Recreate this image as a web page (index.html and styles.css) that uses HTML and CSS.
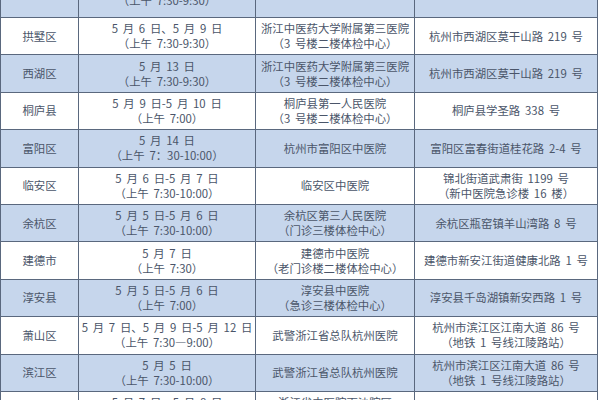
FILE: index.html
```html
<!DOCTYPE html>
<html lang="zh-CN">
<head>
<meta charset="utf-8">
<title>体检安排</title>
<link rel="stylesheet" href="styles.css">
</head>
<body>
<table class="sched">
  <colgroup>
    <col class="c-area">
    <col class="c-date">
    <col class="c-hosp">
    <col class="c-addr">
  </colgroup>
  <tbody>
    <tr class="blue top">
      <td></td>
      <td>5 月 8 日<br>（上午 7:30-9:30）</td>
      <td></td>
      <td></td>
    </tr>
    <tr>
      <td>拱墅区</td>
      <td>5 月 6 日、5 月 9 日<br>（上午 7:30-9:30）</td>
      <td>浙江中医药大学附属第三医院<br>（3 号楼二楼体检中心）</td>
      <td>杭州市西湖区莫干山路 219 号</td>
    </tr>
    <tr class="blue">
      <td>西湖区</td>
      <td>5 月 13 日<br>（上午 7:30-9:30）</td>
      <td>浙江中医药大学附属第三医院<br>（3 号楼二楼体检中心）</td>
      <td>杭州市西湖区莫干山路 219 号</td>
    </tr>
    <tr>
      <td>桐庐县</td>
      <td>5 月 9 日-5 月 10 日<br>（上午 7:00）</td>
      <td>桐庐县第一人民医院<br>（3 号楼二楼体检中心）</td>
      <td>桐庐县学圣路 338 号</td>
    </tr>
    <tr class="blue">
      <td>富阳区</td>
      <td>5 月 14 日<br>（上午 7：30-10:00）</td>
      <td>杭州市富阳区中医院</td>
      <td>富阳区富春街道桂花路 2-4 号</td>
    </tr>
    <tr>
      <td>临安区</td>
      <td>5 月 6 日-5 月 7 日<br>（上午 7:30-10:00）</td>
      <td>临安区中医院</td>
      <td>锦北街道武肃街 1199 号<br>（新中医院急诊楼 16 楼）</td>
    </tr>
    <tr class="blue">
      <td>余杭区</td>
      <td>5 月 5 日-5 月 6 日<br>（上午 7:30-10:00）</td>
      <td>余杭区第三人民医院<br>（门诊三楼体检中心）</td>
      <td>余杭区瓶窑镇羊山湾路 8 号</td>
    </tr>
    <tr>
      <td>建德市</td>
      <td>5 月 7 日<br>（上午 7:30）</td>
      <td>建德市中医院<br>（老门诊楼二楼体检中心）</td>
      <td>建德市新安江街道健康北路 1 号</td>
    </tr>
    <tr class="blue">
      <td>淳安县</td>
      <td>5 月 5 日-5 月 6 日<br>（上午 7:00）</td>
      <td>淳安县中医院<br>（急诊三楼体检中心）</td>
      <td>淳安县千岛湖镇新安西路 1 号</td>
    </tr>
    <tr>
      <td>萧山区</td>
      <td>5 月 7 日、5 月 9 日-5 月 12 日<br>（上午 7:30—9:00）</td>
      <td>武警浙江省总队杭州医院</td>
      <td>杭州市滨江区江南大道 86 号<br>（地铁 1 号线江陵路站）</td>
    </tr>
    <tr class="blue">
      <td>滨江区</td>
      <td>5 月 5 日<br>（上午 7:30-10:00）</td>
      <td>武警浙江省总队杭州医院</td>
      <td>杭州市滨江区江南大道 86 号<br>（地铁 1 号线江陵路站）</td>
    </tr>
    <tr>
      <td>钱塘区</td>
      <td>5 月 7 日、5 月 8 日<br>（上午 7:30-9:30）</td>
      <td>浙江省中医院下沙院区<br>（体检中心）</td>
      <td>钱塘区下沙街道</td>
    </tr>
  </tbody>
</table>
</body>
</html>
```

FILE: styles.css
```css
html, body {
  margin: 0;
  padding: 0;
  background: #ffffff;
  overflow: hidden;
}

.sched {
  border-collapse: collapse;
  table-layout: fixed;
  width: 597px;
  margin-top: -32px;
  font-family: "Noto Sans CJK SC", "Noto Sans", sans-serif;
  font-size: 11.4px;
  line-height: 15px;
  word-spacing: 2.2px;
  color: #4a5569;
}

.c-area { width: 78px; }
.c-date { width: 177px; }
.c-hosp { width: 159px; }
.c-addr { width: 183px; }

.sched td {
  height: 36.4px;
  padding: 0 2px;
  border: 1px solid #5a687e;
  text-align: center;
  vertical-align: middle;
  white-space: nowrap;
  overflow: hidden;
}

.sched tr.top td {
  height: 48px;
}

.sched tr.blue td {
  background: #c6d6ec;
}
```
